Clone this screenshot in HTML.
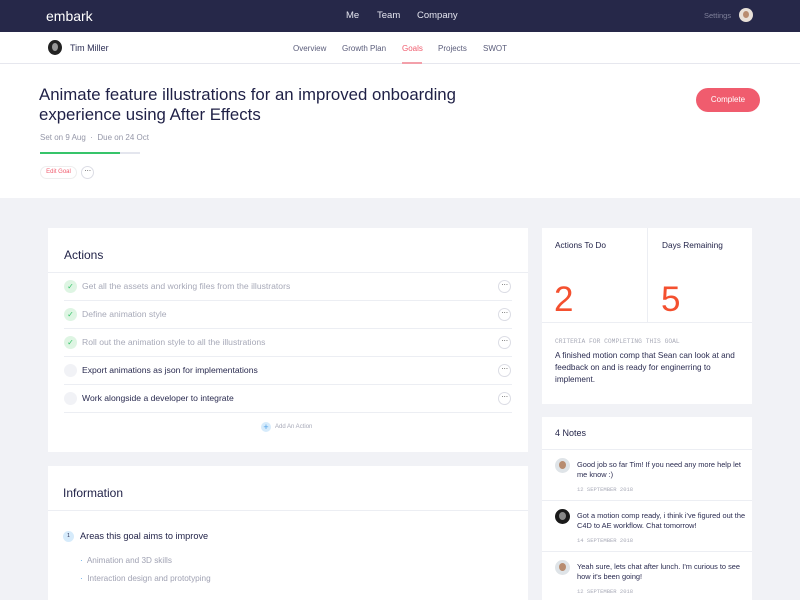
<!DOCTYPE html>
<html><head><style>
*{margin:0;padding:0;box-sizing:border-box}
body{width:800px;height:600px;overflow:hidden;background:#f1f2f6;font-family:"Liberation Sans",sans-serif;position:relative;color:#23244a}
.a{position:absolute}
.nav{left:0;top:0;width:800px;height:32px;background:#262849}
.sub{left:0;top:32px;width:800px;height:32px;background:#fff;border-bottom:1px solid #e6e7ee}
.hdr{left:0;top:64px;width:800px;height:134px;background:#fff}
.card{background:#fff}
.t{white-space:nowrap}
.dots{width:13px;height:13px;border:1px solid #dcdde5;border-radius:50%;font-size:8px;line-height:8px;text-align:center;color:#555;letter-spacing:-0.5px}
.chk{width:13px;height:13px;border-radius:50%;background:#def5e3}
.sep{height:1px;background:#eceef3}
.mono{font-family:"Liberation Mono",monospace;color:#a9abb8}
.av{border-radius:50%;background:#c9d2d8;overflow:hidden}
</style></head><body>
<div class="a nav"></div>
<div class="a t" style="left:46px;top:8px;color:#fff;font-size:14px">embark</div>
<div class="a t" style="left:346px;top:10px;color:#e4e5ef;font-size:9.5px">Me</div>
<div class="a t" style="left:377px;top:10px;color:#e4e5ef;font-size:9.5px">Team</div>
<div class="a t" style="left:417px;top:10px;color:#e4e5ef;font-size:9.5px">Company</div>
<div class="a t" style="left:704px;top:11px;color:#7f819a;font-size:7.5px">Settings</div>
<div class="a av" style="left:739px;top:8px;width:14px;height:14px;background:#e8e0d8"><div style="margin:3px 0 0 4px;width:6px;height:7px;border-radius:50%;background:#b88c70"></div></div>

<div class="a sub"></div>
<div class="a av" style="left:48px;top:40px;width:14px;height:15px;background:#222"><div style="margin:3px 0 0 4px;width:6px;height:8px;border-radius:50%;background:#999"></div></div>
<div class="a t" style="left:70px;top:43px;font-size:9px;color:#2d2f55">Tim Miller</div>
<div class="a t" style="left:293px;top:44px;font-size:8px;color:#5a5c7a">Overview</div>
<div class="a t" style="left:342px;top:44px;font-size:8px;color:#5a5c7a">Growth Plan</div>
<div class="a t" style="left:402px;top:44px;font-size:8px;color:#f05c6e">Goals</div>
<div class="a" style="left:402px;top:62px;width:20px;height:2px;background:#f3a0aa"></div>
<div class="a t" style="left:438px;top:44px;font-size:8px;color:#5a5c7a">Projects</div>
<div class="a t" style="left:483px;top:44px;font-size:8px;color:#5a5c7a">SWOT</div>

<div class="a hdr"></div>
<div class="a" style="left:39px;top:85px;font-size:16.8px;line-height:20px;color:#1f2046;width:470px">Animate feature illustrations for an improved onboarding experience using After Effects</div>
<div class="a" style="left:696px;top:88px;width:64px;height:24px;border-radius:12px;background:#f05c6e;color:#fff;font-size:8px;line-height:24px;text-align:center">Complete</div>
<div class="a t" style="left:40px;top:133px;font-size:8px;color:#9597a8">Set on 9 Aug &nbsp;·&nbsp; Due on 24 Oct</div>
<div class="a" style="left:40px;top:152px;width:100px;height:2px;background:#e4e6ee"><div style="width:80px;height:2px;background:#36c46a"></div></div>
<div class="a t" style="left:40px;top:166px;width:37px;height:13px;border:1px solid #eee;border-radius:7px;font-size:6px;color:#f05c6e;line-height:11px;text-align:center">Edit Goal</div>
<div class="a dots" style="left:81px;top:166px">···</div>

<div class="a card" style="left:48px;top:228px;width:480px;height:224px"></div>
<div class="a t" style="left:64px;top:248px;font-size:12px;color:#1f2046">Actions</div>
<div class="a sep" style="left:48px;top:272px;width:480px"></div>
<div class="a" style="left:64px;top:280px;width:448px">
 <div style="position:relative;height:28px"><div class="a chk" style="left:0;top:0;text-align:center;font-size:8px;color:#36c46a;line-height:13px">✓</div><span class="a t" style="left:18px;top:1px;font-size:8.6px;color:#a7a9b8">Get all the assets and working files from the illustrators</span><div class="a dots" style="right:1px;top:0">···</div><div class="a sep" style="left:0;top:20px;width:448px"></div></div>
 <div style="position:relative;height:28px"><div class="a chk" style="left:0;top:0;text-align:center;font-size:8px;color:#36c46a;line-height:13px">✓</div><span class="a t" style="left:18px;top:1px;font-size:8.6px;color:#a7a9b8">Define animation style</span><div class="a dots" style="right:1px;top:0">···</div><div class="a sep" style="left:0;top:20px;width:448px"></div></div>
 <div style="position:relative;height:28px"><div class="a chk" style="left:0;top:0;text-align:center;font-size:8px;color:#36c46a;line-height:13px">✓</div><span class="a t" style="left:18px;top:1px;font-size:8.6px;color:#a7a9b8">Roll out the animation style to all the illustrations</span><div class="a dots" style="right:1px;top:0">···</div><div class="a sep" style="left:0;top:20px;width:448px"></div></div>
 <div style="position:relative;height:28px"><div class="a chk" style="left:0;top:0;background:#f1f2f6"></div><span class="a t" style="left:18px;top:1px;font-size:8.6px;color:#2a2b50">Export animations as json for implementations</span><div class="a dots" style="right:1px;top:0">···</div><div class="a sep" style="left:0;top:20px;width:448px"></div></div>
 <div style="position:relative;height:28px"><div class="a chk" style="left:0;top:0;background:#f1f2f6"></div><span class="a t" style="left:18px;top:1px;font-size:8.6px;color:#2a2b50">Work alongside a developer to integrate</span><div class="a dots" style="right:1px;top:0">···</div><div class="a sep" style="left:0;top:20px;width:448px"></div></div>
</div>
<div class="a" style="left:261px;top:422px;width:10px;height:10px;border-radius:50%;background:#d6ebfb;color:#4a9fe8;font-size:9px;line-height:10px;text-align:center">+</div>
<div class="a t" style="left:275px;top:424px;font-size:6px;color:#a7a9b8">Add An Action</div>

<div class="a card" style="left:48px;top:466px;width:480px;height:134px"></div>
<div class="a t" style="left:63px;top:486px;font-size:12px;color:#1f2046">Information</div>
<div class="a sep" style="left:48px;top:510px;width:480px"></div>
<div class="a" style="left:63px;top:531px;width:11px;height:11px;border-radius:50%;background:#d6ebfb;font-size:5px;line-height:11px;text-align:center">1</div>
<div class="a t" style="left:80px;top:531px;font-size:9.2px;color:#1f2046">Areas this goal aims to improve</div>
<div class="a t" style="left:80px;top:556px;font-size:8.2px;color:#a0a2b3"><span style="color:#4a9fe8">·</span>&nbsp; Animation and 3D skills</div>
<div class="a t" style="left:80px;top:574px;font-size:8.2px;color:#a0a2b3"><span style="color:#4a9fe8">·</span>&nbsp; Interaction design and prototyping</div>

<div class="a card" style="left:542px;top:228px;width:210px;height:176px"></div>
<div class="a" style="left:647px;top:228px;width:1px;height:94px;background:#eceef3"></div>
<div class="a sep" style="left:542px;top:322px;width:210px"></div>
<div class="a t" style="left:555px;top:240px;font-size:8.3px;color:#1f2046">Actions To Do</div>
<div class="a t" style="left:662px;top:240px;font-size:8.3px;color:#1f2046">Days Remaining</div>
<div class="a t" style="left:554px;top:280px;font-size:35px;color:#f4502f;font-weight:300">2</div>
<div class="a t" style="left:661px;top:280px;font-size:35px;color:#f4502f;font-weight:300">5</div>
<div class="a t mono" style="left:555px;top:338px;font-size:6.3px">CRITERIA FOR COMPLETING THIS GOAL</div>
<div class="a" style="left:555px;top:350px;width:190px;font-size:8.2px;line-height:12px;color:#2a2b50">A finished motion comp that Sean can look at and feedback on and is ready for enginerring to implement.</div>

<div class="a card" style="left:542px;top:417px;width:210px;height:183px"></div>
<div class="a t" style="left:555px;top:428px;font-size:9px;color:#1f2046">4 Notes</div>
<div class="a sep" style="left:542px;top:449px;width:210px"></div>
<div class="a sep" style="left:542px;top:500px;width:210px"></div>
<div class="a sep" style="left:542px;top:551px;width:210px"></div>
<div class="a av" style="left:555px;top:458px;width:15px;height:15px;background:#dfe4e8"><div style="margin:3px 0 0 4px;width:7px;height:8px;border-radius:50%;background:#b88c70"></div></div>
<div class="a" style="left:577px;top:460px;width:172px;font-size:7.4px;line-height:10px;color:#2a2b50">Good job so far Tim! If you need any more help let me know :)</div>
<div class="a t mono" style="left:577px;top:486px;font-size:5.5px">12 SEPTEMBER 2018</div>
<div class="a av" style="left:555px;top:509px;width:15px;height:15px;background:#1a1a1a"><div style="margin:3px 0 0 4px;width:7px;height:8px;border-radius:50%;background:#888"></div></div>
<div class="a" style="left:577px;top:511px;width:172px;font-size:7.4px;line-height:10px;color:#2a2b50">Got a motion comp ready, i think i've figured out the C4D to AE workflow. Chat tomorrow!</div>
<div class="a t mono" style="left:577px;top:537px;font-size:5.5px">14 SEPTEMBER 2018</div>
<div class="a av" style="left:555px;top:560px;width:15px;height:15px;background:#dfe4e8"><div style="margin:3px 0 0 4px;width:7px;height:8px;border-radius:50%;background:#b88c70"></div></div>
<div class="a" style="left:577px;top:562px;width:172px;font-size:7.4px;line-height:10px;color:#2a2b50">Yeah sure, lets chat after lunch. I'm curious to see how it's been going!</div>
<div class="a t mono" style="left:577px;top:588px;font-size:5.5px">12 SEPTEMBER 2018</div>
</body></html>
